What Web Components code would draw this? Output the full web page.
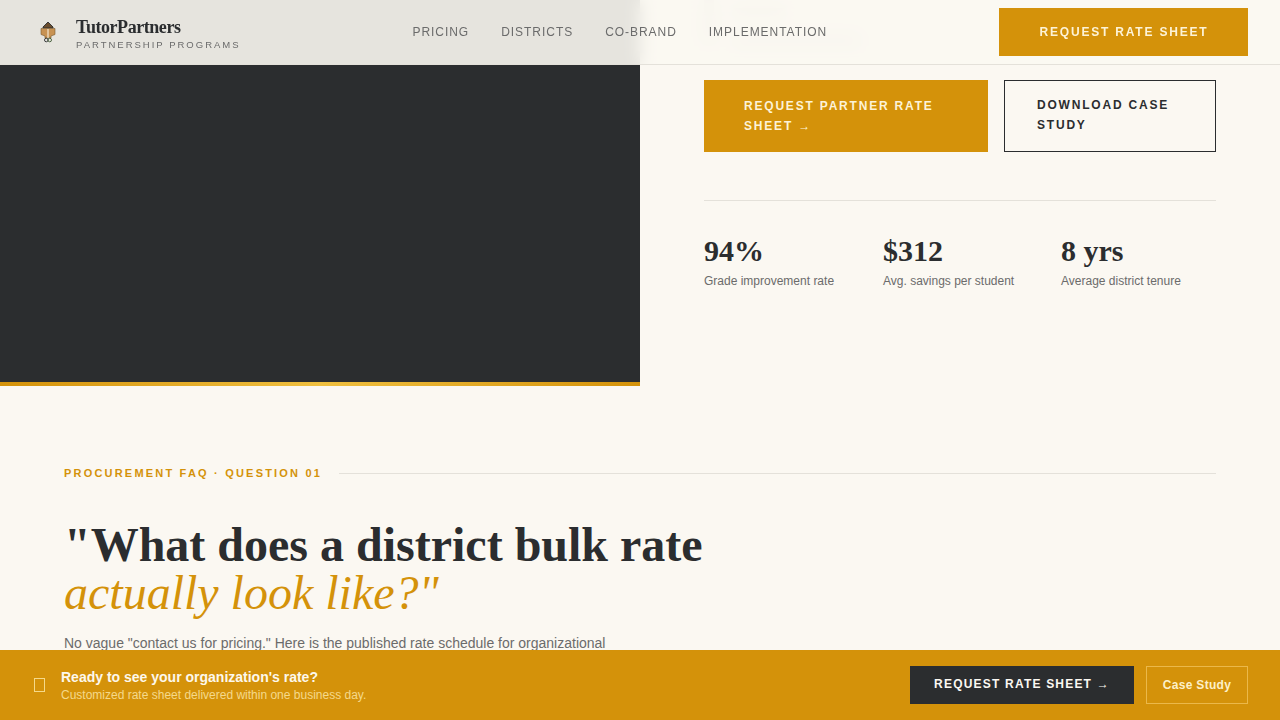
<!DOCTYPE html>
<html lang="en"><head><meta charset="utf-8"><title>TutorPartners</title>
<style>
html,body{margin:0;height:720px;overflow:hidden;background:#fbf8f2}
body{font-family:"Liberation Sans",Arial,sans-serif;color:#2b2d2f}
</style></head><body>
<tp-nav></tp-nav>
<tp-hero></tp-hero>
<tp-faq></tp-faq>
<tp-cta></tp-cta>
<script>
function def(name,html){customElements.define(name,class extends HTMLElement{constructor(){super();this.attachShadow({mode:'open'}).innerHTML=html}})}
def('tp-nav',`<style>
:host{display:flex;position:fixed;z-index:5;top:0;left:0;right:0;height:64px;box-sizing:content-box;align-items:center;justify-content:space-between;padding:0 32px;width:1216px;background:rgba(251,248,242,.9);backdrop-filter:blur(8px);border-bottom:1px solid #e4e1da}
.brand{display:flex;align-items:center;gap:12px}
svg{display:block;width:32px;height:32px}
.txt{padding-top:3px}
.n{font:700 18px/22px "Liberation Serif",serif;letter-spacing:-.45px;color:#2b2d2f}
.s{font:400 9.5px/12px "Liberation Sans",sans-serif;letter-spacing:2px;color:#6b6b6b;margin-top:1px}
nav{display:flex;gap:32px;font:400 12px/16px "Liberation Sans",sans-serif;letter-spacing:.96px;color:#6b6b6b}
.b{box-sizing:border-box;width:249px;height:48px;padding-left:1px;background:#d4920a;color:#fdf3d7;display:flex;align-items:center;justify-content:center;font:700 12px "Liberation Sans",sans-serif;letter-spacing:1.8px}
</style>
<div class="brand"><svg viewBox="0 0 32 32"><path d="M16 6l5 5v1H11v-1z" fill="#6a4c2c" stroke="#2b2d2f" stroke-width=".9"/><path d="M9 12.500h14v6l-4 1.500v2h-6v-2l-4-1.500z" fill="#c89252" stroke="#7a5a30" stroke-width=".6"/><path d="M16 13v9" stroke="#f3e7d2" stroke-width="1.200"/><circle cx="14.300" cy="24" r="1.800" fill="none" stroke="#2b2d2f" stroke-width=".9"/><circle cx="17.700" cy="24" r="1.800" fill="none" stroke="#3f5a33" stroke-width=".9"/></svg>
<div class="txt"><div class="n">TutorPartners</div><div class="s">PARTNERSHIP PROGRAMS</div></div></div>
<nav><span>PRICING</span><span>DISTRICTS</span><span>CO-BRAND</span><span>IMPLEMENTATION</span></nav>
<div class="b">REQUEST RATE SHEET</div>`);
def('tp-hero',`<style>
:host{display:grid;grid-template-columns:640px 640px;height:386px}
.l{background:#2b2d2f;position:relative}
.l::after{content:"";position:absolute;left:0;right:0;bottom:0;height:4px;background:linear-gradient(90deg,#d4920a,#f0c040 50%,#d4920a)}
.r{padding:0 64px;box-sizing:border-box}
.under{height:80px;display:flex;gap:20px;align-items:flex-start;opacity:.3}
.ico{width:10px;height:42px;background:#8d8a80}
.bars{display:flex;flex-direction:column;gap:22px;padding-top:8px}
.bars i{display:block;height:7px;background:#6b6b6b}
.btns{display:flex;gap:16px}
.p,.o{box-sizing:border-box;height:72px;font:700 12px/20px "Liberation Sans",sans-serif;letter-spacing:1.8px}
.p{width:284px;background:#d4920a;color:#fdf3d7;padding:16px 40px}
.o{width:212px;border:1px solid #2b2d2f;color:#2b2d2f;padding:14px 32px}
.stats{display:grid;grid-template-columns:131px 130px auto;gap:48px;margin-top:48px;border-top:1px solid #e4e1da;padding-top:32px}
.v{font:700 30px/36px "Liberation Serif",serif}
.k{font:12px/16px "Liberation Sans",sans-serif;color:#6b6b6b;margin-top:4px;white-space:nowrap}
</style>
<div class="l"></div>
<div class="r"><div class="under"><div class="ico"></div><div class="bars"><i style="width:50px"></i><i style="width:125px"></i></div></div>
<div class="btns"><div class="p">REQUEST PARTNER RATE SHEET →</div><div class="o">DOWNLOAD CASE STUDY</div></div>
<div class="stats"><div><div class="v">94%</div><div class="k">Grade improvement rate</div></div><div><div class="v">$312</div><div class="k">Avg. savings per student</div></div><div><div class="v">8 yrs</div><div class="k">Average district tenure</div></div></div>
</div>`);
def('tp-faq',`<style>
:host{display:block;padding:80px 64px 0}
.e{display:flex;align-items:center;gap:17px;font:700 11px/14px "Liberation Sans",sans-serif;letter-spacing:2.2px;color:#d4920a}
.e i{flex:1;height:1px;background:#e4e1da}
h2{margin:41px 0 0;font:700 48px/48px "Liberation Serif",serif;color:#2b2d2f}
em{display:block;font-weight:400;font-style:italic;color:#d4920a}
p{margin:15px 0 0;font:14px/23px "Liberation Sans",sans-serif;color:#6b6b6b;max-width:576px}
</style>
<div class="e"><span>PROCUREMENT FAQ · QUESTION 01</span><i></i></div>
<h2>"What does a district bulk rate<em>actually look like?"</em></h2>
<p>No vague "contact us for pricing." Here is the published rate schedule for organizational</p>`);
def('tp-cta',`<style>
:host{display:flex;position:fixed;z-index:6;left:0;right:0;bottom:0;height:70px;box-sizing:border-box;align-items:center;justify-content:space-between;padding:0 32px;background:#d4920a}
.l{display:flex;align-items:center;gap:16px}
.g{width:9px;height:12px;border:1px solid #f5d98a;margin:-1px 0 0 2px}
.t{font:700 14px/18px "Liberation Sans",sans-serif;color:#fdf8ec}
.u{font:12px/16px "Liberation Sans",sans-serif;color:#f5d98a;margin-top:1px}
.r{display:flex;gap:12px}
.a,.c{box-sizing:border-box;height:38px;display:flex;align-items:center;justify-content:center;font:700 12px "Liberation Sans",sans-serif}
.a{width:224px;background:#2b2d2f;color:#fbf8f2;letter-spacing:1.2px;padding-bottom:2px}
.c{width:102px;border:1px solid #ebb84a;color:#fdf0c8;letter-spacing:.3px}
</style>
<div class="l"><div class="g"></div><div><div class="t">Ready to see your organization's rate?</div><div class="u">Customized rate sheet delivered within one business day.</div></div></div>
<div class="r"><div class="a">REQUEST RATE SHEET →</div><div class="c">Case Study</div></div>`);
</script></body></html>
